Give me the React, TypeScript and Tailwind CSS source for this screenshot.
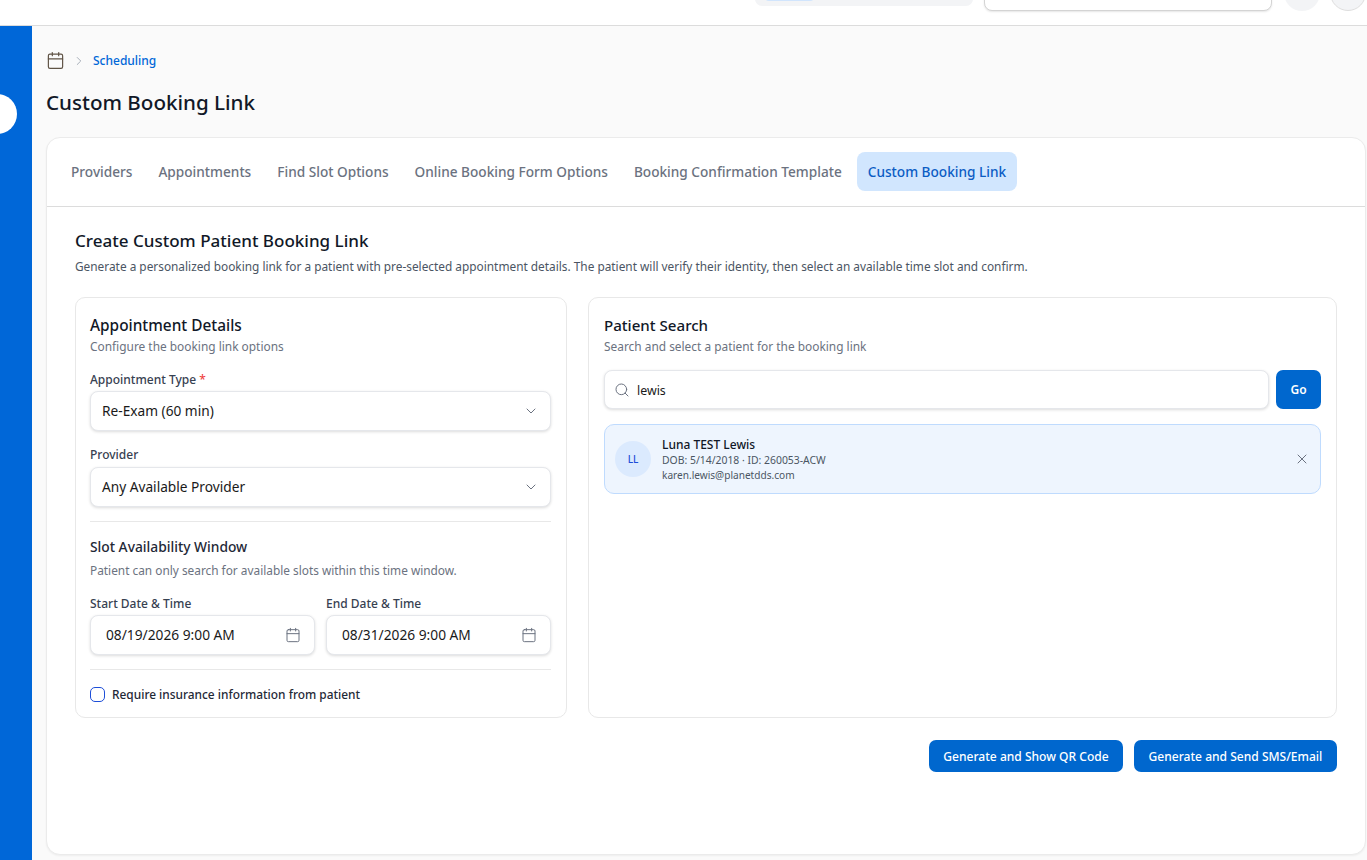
import React from "react";
import { Calendar, ChevronRight, ChevronDown, Search, X } from "lucide-react";

const tabs = ["Providers", "Appointments", "Find Slot Options", "Online Booking Form Options", "Booking Confirmation Template"];

function SelectBox({ value }: { value: string }) {
  return (
    <div className="flex h-[40px] items-center justify-between rounded-[8px] border border-[#e5e7eb] bg-white pl-[11px] pr-[11px] shadow-[0_1px_3px_rgba(0,0,0,0.14)]">
      <span className="text-[13.7px] text-[#1a1a1a]">{value}</span>
      <ChevronDown className="h-[16px] w-[16px] text-[#6b7280]" strokeWidth={1.5} />
    </div>
  );
}

function DateField({ label, value }: { label: string; value: string }) {
  return (
    <div className="min-w-0 flex-1">
      <div className="mb-[3px] h-[17px] text-[12px] font-medium leading-[17px] text-[#374151]">{label}</div>
      <div className="flex h-[40px] items-center justify-between rounded-[8px] border border-[#e5e7eb] bg-white pl-[15px] pr-[13px] shadow-[0_1px_3px_rgba(0,0,0,0.14)]">
        <span className="text-[13.75px] text-[#1a1a1a]">{value}</span>
        <Calendar className="h-[16px] w-[16px] text-[#6b7280]" strokeWidth={1.5} />
      </div>
    </div>
  );
}

export default function App() {
  return (
    <div className="flex h-[860px] w-[1367px] flex-col overflow-hidden bg-[#fafafa] font-['Noto_Sans',sans-serif]">
      <header className="flex h-[26px] shrink-0 items-end overflow-hidden border-b border-[#dcdcdc] bg-white">
        <div className="mb-[19px] ml-[755px] flex h-[40px] w-[218px] shrink-0 items-end rounded-[7px] bg-[#f3f4f6] pb-[5px] pl-[10px]">
          <div className="h-[10px] w-[49px] rounded-[4px] bg-[#d1e5fd]" />
        </div>
        <div className="mb-[14px] ml-[11px] h-[40px] w-[288px] shrink-0 rounded-[8px] border border-[#d4d4d4] bg-white shadow-[0_1px_2px_rgba(0,0,0,0.1)]" />
        <div className="mb-[14px] ml-[12px] h-[36px] w-[36px] shrink-0 rounded-full bg-[#f3f4f6]" />
        <div className="mb-[14px] ml-[10px] h-[36px] w-[36px] shrink-0 rounded-full border border-[#dedede] bg-[#f3f4f6]" />
      </header>

      <div className="flex min-h-0 flex-1">
        <aside className="relative w-[32px] shrink-0 bg-[#0067d8]">
          <div className="absolute left-[-23px] top-[68px] h-[40px] w-[40px] rounded-full bg-white" />
        </aside>

        <main className="min-w-0 flex-1 pl-[14px] pt-[25px]">
          <nav className="flex h-[19px] items-center">
            <Calendar className="h-[19px] w-[19px] text-[#5f5345]" strokeWidth={1.5} />
            <ChevronRight className="ml-[7px] h-[14px] w-[14px] text-[#9ca3af]" strokeWidth={1.5} />
            <span className="ml-[7px] text-[12px] font-medium text-[#0067d8]">Scheduling</span>
          </nav>
          <h1 className="mt-[17px] h-[31px] text-[20.6px] font-medium leading-[30px] text-[#111827]">Custom Booking Link</h1>

          <section className="mt-[19px] h-[718px] w-[1320px] rounded-[14px] border border-[#ebebeb] bg-white shadow-[0_1px_2px_rgba(0,0,0,0.05)]">
            <div className="flex h-[69px] items-start gap-[4px] border-b border-[#dcdcdc] pl-[13px] pt-[14px]">
              {tabs.map((t) => (
                <div key={t} className="flex h-[39px] items-center px-[11px] pt-[2px] text-[13.65px] font-medium text-[#6b7280]">{t}</div>
              ))}
              <div className="flex h-[39px] items-center rounded-[8px] bg-[#d1e6fe] px-[11px] pt-[2px] text-[13.65px] font-medium text-[#0b5cc4]">Custom Booking Link</div>
            </div>

            <div className="px-[28px] pt-[21px]">
              <h2 className="h-[26px] text-[17.05px] font-medium leading-[26px] text-[#111827]">Create Custom Patient Booking Link</h2>
              <p className="mt-[4px] h-[17px] text-[11.85px] leading-[17px] text-[#4b5563]">Generate a personalized booking link for a patient with pre-selected appointment details. The patient will verify their identity, then select an available time slot and confirm.</p>

              <div className="mt-[22px] flex h-[421px] gap-[21px]">
                <div className="w-[492px] shrink-0 rounded-[10px] border border-[#e8e8e8] bg-white px-[14px] pt-[17px]">
                  <h3 className="h-[21px] text-[15.4px] font-medium leading-[21px] text-[#111827]">Appointment Details</h3>
                  <p className="mt-[2px] h-[17px] text-[11.9px] leading-[17px] text-[#6b7280]">Configure the booking link options</p>
                  <div className="mt-[16px] h-[17px] text-[12px] font-medium leading-[17px] text-[#374151]">Appointment Type <span className="text-[#ef4444]">*</span></div>
                  <div className="mt-[3px] pr-[1px]"><SelectBox value="Re-Exam (60 min)" /></div>
                  <div className="mt-[15px] h-[17px] text-[12px] font-medium leading-[17px] text-[#374151]">Provider</div>
                  <div className="mt-[4px] pr-[1px]"><SelectBox value="Any Available Provider" /></div>
                  <div className="mt-[14px] mr-[1px] border-t border-[#e8e8e8]" />
                  <h4 className="mt-[16px] h-[18px] text-[13.8px] font-medium leading-[18px] text-[#1f2937]">Slot Availability Window</h4>
                  <p className="mt-[6px] h-[16px] text-[11.85px] leading-[16px] text-[#6b7280]">Patient can only search for available slots within this time window.</p>
                  <div className="mt-[17px] flex gap-[11px] pr-[1px]">
                    <DateField label="Start Date & Time" value="08/19/2026 9:00 AM" />
                    <DateField label="End Date & Time" value="08/31/2026 9:00 AM" />
                  </div>
                  <div className="mt-[14px] mr-[1px] border-t border-[#e8e8e8]" />
                  <div className="mt-[16px] flex items-center">
                    <span className="h-[15px] w-[15px] rounded-[5px] border border-[#1d4ed8] bg-white" />
                    <span className="ml-[7px] text-[11.9px] font-medium text-[#1f2937]">Require insurance information from patient</span>
                  </div>
                </div>

                <div className="min-w-0 flex-1 rounded-[10px] border border-[#e8e8e8] bg-white px-[15px] pt-[17px]">
                  <h3 className="h-[21px] text-[15.1px] font-medium leading-[21px] text-[#111827]">Patient Search</h3>
                  <p className="mt-[2px] h-[17px] text-[11.9px] leading-[17px] text-[#6b7280]">Search and select a patient for the booking link</p>
                  <div className="mt-[15px] flex gap-[7px]">
                    <div className="flex h-[39px] min-w-0 flex-1 items-center rounded-[8px] border border-[#e5e7eb] bg-white pl-[9px] shadow-[0_1px_3px_rgba(0,0,0,0.14)]">
                      <Search className="h-[16px] w-[16px] text-[#6b7280]" strokeWidth={1.5} />
                      <span className="ml-[7px] mt-[3px] text-[12.4px] text-[#1a1a1a]">lewis</span>
                    </div>
                    <button className="h-[39px] w-[45px] shrink-0 rounded-[7px] bg-[#0067ce] text-[12px] font-semibold text-white">Go</button>
                  </div>
                  <div className="mt-[15px] flex h-[70px] items-center rounded-[10px] border border-[#bfdbfe] bg-[#eef5fe] pl-[10px] pr-[10px]">
                    <div className="flex h-[36px] w-[36px] shrink-0 items-center justify-center rounded-full bg-[#dbeafe] text-[10px] font-medium text-[#1d4ed8]">LL</div>
                    <div className="ml-[11px] min-w-0 flex-1 pt-[2px]">
                      <div className="h-[16px] text-[12px] font-medium leading-[15px] text-[#111827]">Luna TEST Lewis</div>
                      <div className="h-[15px] text-[10.4px] leading-[15px] text-[#4b5563]">DOB: 5/14/2018 · ID: 260053-ACW</div>
                      <div className="h-[15px] text-[10.1px] leading-[15px] text-[#4b5563]">karen.lewis@planetdds.com</div>
                    </div>
                    <X className="h-[16px] w-[16px] text-[#6b7280]" strokeWidth={1.5} />
                  </div>
                </div>
              </div>

              <div className="mt-[22px] flex justify-end gap-[11px]">
                <button className="h-[32px] w-[194px] rounded-[7px] bg-[#0067ce] pt-[2px] text-[12.05px] font-medium text-white">Generate and Show QR Code</button>
                <button className="h-[32px] w-[203px] rounded-[7px] bg-[#0067ce] pt-[2px] text-[12.05px] font-medium text-white">Generate and Send SMS/Email</button>
              </div>
            </div>
          </section>
        </main>
      </div>
    </div>
  );
}
